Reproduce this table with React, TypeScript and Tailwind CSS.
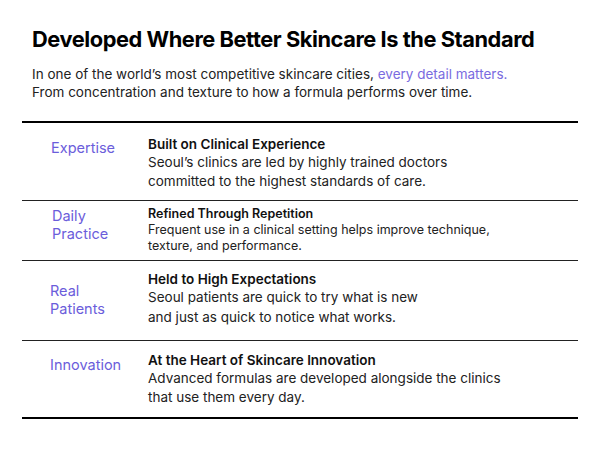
const rows = [
  {
    label: ["Expertise"],
    title: "Built on Clinical Experience",
    body: ["Seoul’s clinics are led by highly trained doctors", "committed to the highest standards of care."],
    rowClass: "h-[77px] pt-[12px]",
    labelClass: "pt-[4px] pl-[29px] text-[14.5px] leading-[18px]",
    titleClass: "text-[13.5px] leading-[18px]",
    bodyClass: "text-[13.5px] leading-[19px]",
  },
  {
    label: ["Daily", "Practice"],
    title: "Refined Through Repetition",
    body: ["Frequent use in a clinical setting helps improve technique,", "texture, and performance."],
    rowClass: "h-[60px] pt-[5px]",
    labelClass: "pt-[1px] pl-[30px] text-[14.5px] leading-[18px]",
    titleClass: "text-[12.5px] leading-[16px]",
    bodyClass: "text-[12.5px] leading-[15.5px]",
  },
  {
    label: ["Real", "Patients"],
    title: "Held to High Expectations",
    body: ["Seoul patients are quick to try what is new", "and just as quick to notice what works."],
    rowClass: "h-[80px] pt-[9px]",
    labelClass: "pt-[12px] pl-[28px] text-[14.5px] leading-[18px]",
    titleClass: "text-[13.5px] leading-[18px]",
    bodyClass: "text-[13.5px] leading-[19.5px]",
  },
  {
    label: ["Innovation"],
    title: "At the Heart of Skincare Innovation",
    body: ["Advanced formulas are developed alongside the clinics", "that use them every day."],
    rowClass: "h-[77px] pt-[10px]",
    labelClass: "pt-[5px] pl-[28px] text-[14.5px] leading-[18px]",
    titleClass: "text-[13.5px] leading-[18px]",
    bodyClass: "text-[13.5px] leading-[19px]",
  },
];

export default function App() {
  return (
    <div className="w-[600px] h-[450px] bg-white overflow-hidden font-['Inter',sans-serif]">
      <div className="px-8 pt-[25px]">
        <h1 className="text-[21.8px] leading-[28px] font-bold tracking-[-0.02em] text-black">
          Developed Where Better Skincare Is the Standard
        </h1>
        <p className="mt-[12px] text-[13.5px] leading-[18px] text-[#222]">
          In one of the world’s most competitive skincare cities,{" "}
          <span className="text-[#7a6be0]">every detail matters.</span>
          <br />
          From concentration and texture to how a formula performs over time.
        </p>
      </div>

      <div className="mx-[22px] mt-[20px] border-t-2 border-b-2 border-black">
        {rows.map((row, i) => (
          <div
            key={row.title}
            className={`flex ${row.rowClass} ${i > 0 ? "border-t border-[#222]" : ""}`}
          >
            <div className={`w-[126px] shrink-0 text-[#6b5ddb] ${row.labelClass}`}>
              {row.label.map((l) => (
                <div key={l}>{l}</div>
              ))}
            </div>
            <div className="text-[#222]">
              <div className={`font-semibold text-[#111] ${row.titleClass}`}>{row.title}</div>
              {row.body.map((b) => (
                <div key={b} className={row.bodyClass}>
                  {b}
                </div>
              ))}
            </div>
          </div>
        ))}
      </div>
    </div>
  );
}
